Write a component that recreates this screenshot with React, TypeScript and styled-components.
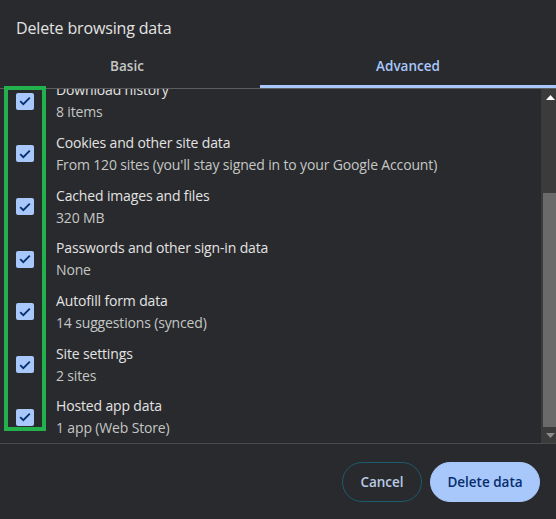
import React, { useLayoutEffect, useRef } from "react";
import styled, { createGlobalStyle } from "styled-components";

const Global = createGlobalStyle`
  html, body { margin: 0; padding: 0; background: #292a2d; }
  body { font-family: "Open Sans", "Noto Sans", Arial, sans-serif; }
  * { box-sizing: border-box; }
`;

const Dialog = styled.div`
  position: relative;
  width: 556px;
  height: 519px;
  background: #292a2d;
  color: #e3e3e3;
  display: flex;
  flex-direction: column;
  overflow: hidden;
`;

const Title = styled.h1`
  margin: 0;
  padding: 17px 16px 6px;
  font-size: 16px;
  line-height: 22px;
  font-weight: 400;
  color: #e3e3e3;
  letter-spacing: -0.15px;
`;

const TabList = styled.div`
  display: grid;
  grid-template-columns: 260px 1fr;
  border-bottom: 1px solid #5b5d61;
`;

const Tab = styled.div<{ $active?: boolean; $shift?: number }>`
  height: 43px;
  display: flex;
  align-items: center;
  justify-content: center;
  padding-top: 2px;
  padding-right: ${(p) => p.$shift ?? 0}px;
  border-bottom: 3px solid ${(p) => (p.$active ? "#a8c7fa" : "transparent")};
  font-size: 13.5px;
  font-weight: 600;
  color: ${(p) => (p.$active ? "#a8c7fa" : "#c4c7c5")};
`;

const Body = styled.div`
  height: 354px;
  display: flex;
`;

const Viewport = styled.div`
  flex: 1;
  overflow: hidden;
`;

const Row = styled.div`
  height: 52.67px;
  display: flex;
  align-items: center;
  padding-left: 16px;
  padding-top: 2px;
  gap: 22px;
`;

const Box = styled.div`
  width: 18px;
  height: 17px;
  border-radius: 2px;
  background: #a8c7fa;
  display: flex;
  align-items: center;
  justify-content: center;
  flex: none;
`;

const Texts = styled.div`
  display: flex;
  flex-direction: column;
`;

const Label = styled.div`
  font-size: 14px;
  line-height: 22px;
  color: #e3e3e3;
  letter-spacing: -0.15px;
  white-space: nowrap;
`;

const Sub = styled(Label)`
  color: #c4c7c5;
`;

const Scrollbar = styled.div`
  width: 15px;
  background: #3b3b3b;
  display: flex;
  flex-direction: column;
`;

const ArrowButton = styled.div`
  height: 16px;
  display: flex;
  align-items: center;
  justify-content: center;
  padding-left: 3px;
`;

const Track = styled.div`
  flex: 1;
  display: flex;
  flex-direction: column;
  justify-content: flex-end;
  padding-left: 2px;
`;

const Thumb = styled.div<{ $size: number }>`
  height: ${(p) => p.$size}px;
  background: #6a6a6a;
`;

const Footer = styled.div`
  border-top: 1px solid #4a4b4f;
  padding: 18px 16px 17px;
  display: flex;
  justify-content: flex-end;
  gap: 8px;
`;

const Button = styled.button<{ $primary?: boolean; $width: number }>`
  height: 40px;
  width: ${(p) => p.$width}px;
  padding: 0;
  border-radius: 20px;
  font-family: "Open Sans", "Noto Sans", Arial, sans-serif;
  font-size: 13.5px;
  font-weight: 600;
  cursor: pointer;
  border: 1px solid ${(p) => (p.$primary ? "#a8c7fa" : "#1d5b6e")};
  background: ${(p) => (p.$primary ? "#a8c7fa" : "transparent")};
  color: ${(p) => (p.$primary ? "#062e6f" : "#b9cbe6")};
`;

const Highlight = styled.div`
  position: absolute;
  left: 4px;
  top: 86px;
  width: 42px;
  height: 345px;
  border: 4px solid #22b14c;
  pointer-events: none;
`;

const Check = () => (
  <svg width="12" height="10" viewBox="0 0 12 10">
    <polyline
      points="1.2,5.2 4.3,8.2 10.8,1.6"
      fill="none"
      stroke="#062e6f"
      strokeWidth="1.8"
    />
  </svg>
);

const items: [string, string][] = [
  ["Download history", "8 items"],
  ["Cookies and other site data", "From 120 sites (you'll stay signed in to your Google Account)"],
  ["Cached images and files", "320 MB"],
  ["Passwords and other sign-in data", "None"],
  ["Autofill form data", "14 suggestions (synced)"],
  ["Site settings", "2 sites"],
  ["Hosted app data", "1 app (Web Store)"],
];

export default function App() {
  const ref = useRef<HTMLDivElement>(null);
  useLayoutEffect(() => {
    if (ref.current) ref.current.scrollTop = ref.current.scrollHeight;
  }, []);
  return (
    <Dialog>
      <Global />
      <Title>Delete browsing data</Title>
      <TabList>
        <Tab $shift={6}>Basic</Tab>
        <Tab $active>Advanced</Tab>
      </TabList>
      <Body>
        <Viewport ref={ref}>
          {items.map(([t, s]) => (
            <Row key={t}>
              <Box>
                <Check />
              </Box>
              <Texts>
                <Label>{t}</Label>
                <Sub>{s}</Sub>
              </Texts>
            </Row>
          ))}
        </Viewport>
        <Scrollbar>
          <ArrowButton>
            <svg width="9" height="5" viewBox="0 0 9 5">
              <polygon points="0,5 4.5,0 9,5" fill="#ffffff" />
            </svg>
          </ArrowButton>
          <Track>
            <Thumb $size={234} />
          </Track>
          <ArrowButton>
            <svg width="9" height="5" viewBox="0 0 9 5">
              <polygon points="0,0 9,0 4.5,5" fill="#8a8a8a" />
            </svg>
          </ArrowButton>
        </Scrollbar>
      </Body>
      <Footer>
        <Button $width={80}>Cancel</Button>
        <Button $primary $width={110}>
          Delete data
        </Button>
      </Footer>
      <Highlight />
    </Dialog>
  );
}
